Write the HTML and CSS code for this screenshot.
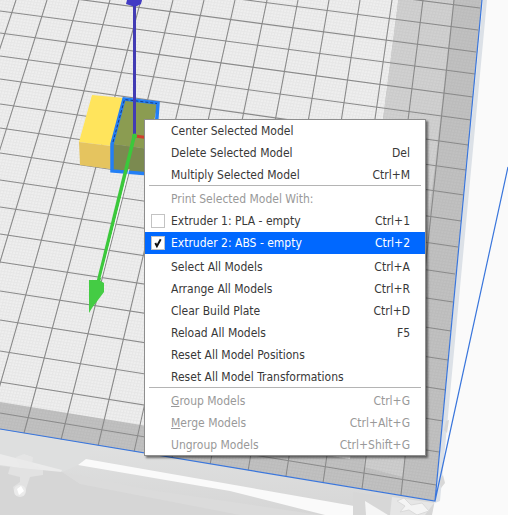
FILE: index.html
```html
<!DOCTYPE html>
<html lang="en">
<head>
<meta charset="utf-8">
<meta name="viewport" content="width=device-width, initial-scale=1">
<title>Build plate</title>
<link rel="stylesheet" href="styles.css">
</head>
<body>
<main class="viewport">
  <svg class="scene" viewBox="0 0 508 515" preserveAspectRatio="xMinYMin slice" aria-hidden="true">
    <defs>
      <pattern id="mesh" width="3" height="3" patternUnits="userSpaceOnUse" patternTransform="matrix(1 0.14 -0.26 1 0 0)">
        <path d="M0 .5H3M.5 0V3" stroke="#777" stroke-opacity=".07" stroke-width="1"/>
      </pattern>
      <linearGradient id="base" x1="0" y1="0" x2="0" y2="1">
        <stop offset="0" stop-color="#e2e3e3"/><stop offset="1" stop-color="#d6d6d6"/>
      </linearGradient>
      <clipPath id="plate"><path d="M-10 -10H483L435 501L-10 427.500Z"/></clipPath>
    </defs>
    <rect width="508" height="515" fill="#fafafa"/>

    <!-- printer frame below the plate -->
    <path d="M0 425L435 500L432 515H0Z" fill="url(#base)"/>
    <path d="M0 430L96 447L78 465L62 472L0 461Z" fill="#dedfdf"/>
    <path d="M0 454L62 470L60 474L0 465Z" fill="#ebebeb"/>
    <path d="M62 472L80 481L260 515H0V466Z" fill="#d6d6d6"/>
    <path d="M62 472L150 490L320 515H240L80 484Z" fill="#dbdbdb"/>
    <path d="M86 459L354 506L366 515H325L230 491L78 465Z" fill="#fafafa"/>
    <path d="M353 492L392 498L386 515H353Z" fill="#d7d7d7"/>
    <path d="M365 501L388 515H366Z" fill="#f6f6f6"/>
    <path d="M392 497L434 503L425 515H390Z" fill="#e6e6e6"/>
    <path d="M397 501L404 498L411 505L422 503L429 511L417 515L409 510L400 512L405 506Z" fill="#f4f4f4" stroke="#dadada"/>
    <path d="M16 457L24 454L33 457L32 465L43 469V475L30 477L27 486L24 495H15L13 487L20 482V477L8 474L10 467L20 467Z" fill="#e9e9e9" opacity=".6"/>
    <circle cx="20" cy="491" r="6" fill="#f0f0f0" opacity=".7"/>
    <path d="M17 489L21 486L24 491L19 495Z" fill="#fff"/>
    <path d="M483 0H487L440 501L435 503Z" fill="#dce1e7"/>
    <path d="M449 420L447 433L444 430L446 421ZM443 475L445 483L441 488L439 480Z" fill="#d8d8d8"/>

    <!-- plate, its shadows and grid -->
    <g clip-path="url(#plate)">
      <rect x="-5" y="-5" width="513" height="515" fill="#efefef"/>
      <path d="M399 -5L383 119L350 459L0 402V430L435 503L485 0V-5Z" fill="#c1c1c1"/>
      <path d="M399 -5H454L435 165L421 275H365L383 119Z" fill="#d1d1d1"/>
      <path d="M365 455L405 457L403 477L364 467Z" fill="#cecece"/>
      <rect x="-5" y="-5" width="513" height="515" fill="url(#mesh)"/>
      <g stroke="#8a8a8a" stroke-width="1.100" fill="none">
        <path d="M0 -53L480 8M0 -32L478 30M0 -11L476 52M0 11L475 74M0 33L473 97M0 56L471 120M0 79L468 145M0 104L466 170M0 128L464 195M0 153L461 221M0 180L458 247M0 207L455 274M0 234L453 302M0 262L451 331M0 291L448 360M0 320L446 390M0 351L443 421M0 382L439 452M0 413L436 485"/>
        <path d="M16 0L-120 410M47 0L-84 416M79 0L-48 421M110 0L-12 427M141 0L24 433M173 0L61 440M204 0L98 446M235 0L134 452M267 0L172 458M298 0L210 465M329 0L248 471M360 0L286 476M392 0L323 483M423 0L362 489M454 0L401 495"/>
      </g>
    </g>
    <path d="M482 0L435 501L0 429M508 167L435 501" fill="none" stroke="#3a76dc" stroke-width="1.200"/>

    <!-- models -->
    <path d="M92 95L124 98L111 146L79 142Z" fill="#ffe45c"/>
    <path d="M79 142L111 146V169L80 165Z" fill="#e5c45f"/>
    <path d="M124 99L158 103L148 149L112 144Z" fill="#8b9c51"/>
    <path d="M112 144L148 149L144 175L112 170Z" fill="#7b8a50"/>
    <path d="M150 174L112 171V144L124 99L158 103L156 130" fill="none" stroke="#237ff5" stroke-width="3.500"/>
    <path d="M113 142L124.500 99.500L157 103.500" fill="none" stroke="#173a86" stroke-width="1" stroke-dasharray="3 2"/>

    <!-- move handles -->
    <path d="M135 136L150 138" stroke="#d0402c" stroke-width="3"/>
    <path d="M134.500 3V136" stroke="#423bb4" stroke-width="3"/>
    <path d="M127 0H142L141 4L137 6H132L126 4Z" fill="#423bc4"/>
    <path d="M134 137L98 283" stroke="#3bc83b" stroke-width="3.500"/>
    <path d="M129 169L101 278" stroke="#fff" stroke-width=".8"/>
    <circle cx="134.500" cy="136" r="2.500" fill="#3bc83b"/>
    <path d="M89 280H99L104 283V292L92 308L89 313Z" fill="#44cc44"/>
  </svg>

  <div class="menu" role="menu" aria-label="Model actions">
    <button class="item" role="menuitem"><span>Center Selected Model</span></button>
    <button class="item" role="menuitem"><span>Delete Selected Model</span><kbd>Del</kbd></button>
    <button class="item" role="menuitem"><span>Multiply Selected Model</span><kbd>Ctrl+M</kbd></button>
    <hr class="rule">
    <div class="item disabled">Print Selected Model With:</div>
    <label class="item" for="extruder1"><input class="check" id="extruder1" type="checkbox"><span>Extruder 1: PLA - empty</span><kbd>Ctrl+1</kbd></label>
    <label class="item active" for="extruder2"><input class="check" id="extruder2" type="checkbox" checked><svg class="tick" viewBox="0 0 13 13" aria-hidden="true"><path d="M4 6.500L5.500 9.500L9 3" fill="none" stroke="#111" stroke-width="1.800"/></svg><span>Extruder 2: ABS - empty</span><kbd>Ctrl+2</kbd></label>
    <hr class="rule blank">
    <button class="item" role="menuitem"><span>Select All Models</span><kbd>Ctrl+A</kbd></button>
    <button class="item" role="menuitem"><span>Arrange All Models</span><kbd>Ctrl+R</kbd></button>
    <button class="item" role="menuitem"><span>Clear Build Plate</span><kbd>Ctrl+D</kbd></button>
    <button class="item" role="menuitem"><span>Reload All Models</span><kbd>F5</kbd></button>
    <button class="item" role="menuitem"><span>Reset All Model Positions</span></button>
    <button class="item" role="menuitem"><span>Reset All Model Transformations</span></button>
    <hr class="rule">
    <button class="item disabled" role="menuitem" disabled><span><u>G</u>roup Models</span><kbd>Ctrl+G</kbd></button>
    <button class="item disabled" role="menuitem" disabled><span><u>M</u>erge Models</span><kbd>Ctrl+Alt+G</kbd></button>
    <button class="item disabled" role="menuitem" disabled><span>Ungroup Models</span><kbd>Ctrl+Shift+G</kbd></button>
  </div>
</main>
</body>
</html>
```
FILE: styles.css
```css
* {
  box-sizing: border-box;
}

body {
  margin: 0;
  font-family: "DejaVu Sans Condensed", "Noto Sans", sans-serif;
  font-size: 12px;
  color: #383838;
}

.viewport {
  position: relative;
  min-height: 100vh;
  overflow: hidden;
  background: #fafafa;
}

.scene {
  position: absolute;
  inset: 0;
  width: 100%;
  height: 100%;
}

/* context menu opened over the scene */
.menu {
  position: absolute;
  left: 144px;
  top: 119px;
  width: 282px;
  display: flex;
  flex-direction: column;
  background: #fff;
  border: 1px solid #8e8e8e;
  box-shadow: 2px 2px 2px rgba(0, 0, 0, 0.5);
}

.item {
  position: relative;
  display: flex;
  align-items: center;
  justify-content: space-between;
  height: 22px;
  margin: 0;
  padding: 0 15px 0 26px;
  border: 0;
  background: none;
  color: inherit;
  font: inherit;
  line-height: 22px;
  text-align: left;
  white-space: nowrap;
}

.item kbd {
  font: inherit;
}

.item.active {
  background: #0068ff;
  color: #fff;
}

.item.disabled {
  color: #999;
}

.item:last-child {
  height: 21px;
}

.check,
.tick {
  position: absolute;
  left: 6px;
  top: 4px;
  width: 14px;
  height: 14px;
  margin: 0;
}

.check {
  appearance: none;
  background: #fff;
  border: 1px solid #c3c3c3;
}

.tick {
  pointer-events: none;
}

.rule {
  width: auto;
  height: 3px;
  margin: -1px 4px 0;
  border: 0;
  border-top: 1px solid #b4b4b4;
}

.blank {
  border-color: transparent;
}
```
